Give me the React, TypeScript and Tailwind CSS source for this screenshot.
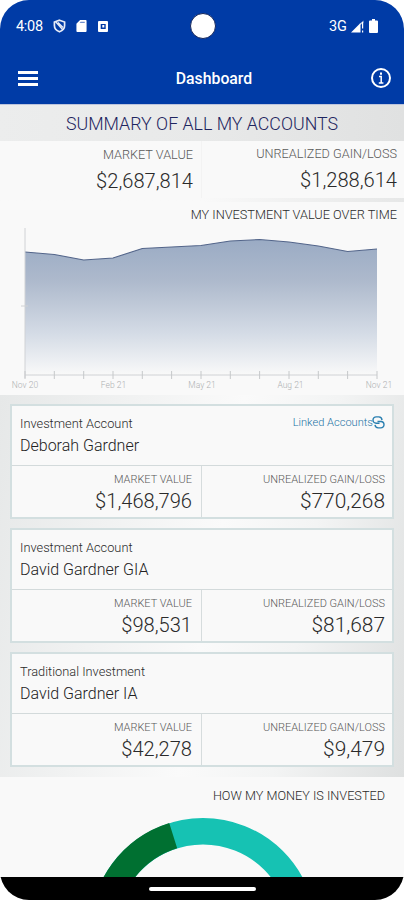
import { FunctionComponent } from "react";

type Account = {
  kind: string;
  name: string;
  marketValue: string;
  gainLoss: string;
  linked?: boolean;
};

const accounts: Account[] = [
  {
    kind: "Investment Account",
    name: "Deborah Gardner",
    marketValue: "$1,468,796",
    gainLoss: "$770,268",
    linked: true,
  },
  {
    kind: "Investment Account",
    name: "David Gardner GIA",
    marketValue: "$98,531",
    gainLoss: "$81,687",
  },
  {
    kind: "Traditional Investment",
    name: "David Gardner IA",
    marketValue: "$42,278",
    gainLoss: "$9,479",
  },
];

const months = ["Nov 20", "Feb 21", "May 21", "Aug 21", "Nov 21"];

const StatusBar: FunctionComponent = () => (
  <div className="grid h-[52px] grid-cols-[190px_26px_1fr] items-center pr-[26px] text-white">
    <div className="flex items-center pl-4">
      <span className="w-[37px] pt-0.5 text-[14.5px] leading-none tracking-[-0.3px]">4:08</span>
      <svg className="h-[14px] w-[13px]" viewBox="0 0 13 14" fill="none" stroke="#e6ebf7" strokeWidth="1.7">
        <path d="M6.5 1.2 11.6 3v3.6c0 3-2.2 5.2-5.1 6.2C3.6 11.8 1.4 9.6 1.4 6.6V3Z" />
        <path d="m2.5 2.5 7.5 8.5M5 3.5l5 5" strokeWidth="1.4" />
      </svg>
      <svg className="ml-[9.5px] h-[12px] w-[11px]" viewBox="0 0 11 13" fill="white">
        <path d="M4 0h6a1 1 0 0 1 1 1v11a1 1 0 0 1-1 1H1a1 1 0 0 1-1-1V4Z" />
        <path d="M4.5 2H9v1.2H3.5z" fill="#6f8fcf" />
      </svg>
      <svg className="ml-[11px] h-[11px] w-[10px]" viewBox="0 0 10 11">
        <rect width="10" height="11" rx="1" fill="white" />
        <rect x="2.7" y="3" width="5" height="5" fill="#0039a6" />
        <rect x="4.3" y="4" width="2" height="2.5" fill="white" />
      </svg>
    </div>
    <div className="h-[26px] w-[26px] rounded-full border border-[#14265a] bg-white" />
    <div className="flex items-center justify-end">
      <span className="pt-0.5 text-[14.5px] leading-none tracking-[-0.3px]">3G</span>
      <svg className="ml-[4px] h-[13px] w-[13px]" viewBox="0 0 13 13" fill="white">
        <path d="M0 12.5 9.5 3v9.5Z" />
        <path d="M11 2h1.2v6.5H11zM11 10.5h1.2v2H11z" />
        <path d="m8.5 4 4-3.5v2L9.5 5z" opacity="0.7" />
      </svg>
      <svg className="ml-[5.5px] h-[14px] w-[9px]" viewBox="0 0 9 14" fill="white">
        <path d="M3 0h3v1.5h2a1 1 0 0 1 1 1V13a1 1 0 0 1-1 1H1a1 1 0 0 1-1-1V2.5a1 1 0 0 1 1-1h2Z" />
      </svg>
    </div>
  </div>
);

const NavBar: FunctionComponent = () => (
  <div className="flex h-[52px] items-center pr-[13px] pl-[18px] text-white">
    <div className="flex w-5 flex-col gap-[3px]">
      <div className="h-[3px] bg-white" />
      <div className="h-[3px] bg-white" />
      <div className="h-[3px] bg-white" />
    </div>
    <h1 className="flex-1 pt-0.5 pl-[19px] text-center text-[15.8px] leading-none font-medium">Dashboard</h1>
    <svg className="h-5 w-5" viewBox="0 0 20 20" fill="none" stroke="white">
      <circle cx="10" cy="10" r="9" strokeWidth="2" />
      <path d="M8 8.5h2.2V15M7.8 15h4.6" strokeWidth="1.5" />
      <path d="M10 4.5v2.2" strokeWidth="2" />
    </svg>
  </div>
);

type FigureProps = {
  label: string;
  value: string;
};

const TotalFigure: FunctionComponent<FigureProps> = ({ label, value }) => (
  <div className="flex flex-col items-end whitespace-nowrap">
    <span className="text-[12.7px] leading-4 font-light text-[#5a5a5a]">{label}</span>
    <span className="mt-1 text-[20.1px] leading-7 font-light text-[#2a2a2a]">{value}</span>
  </div>
);

const MarketFigure: FunctionComponent<{ value: string }> = ({ value }) => (
  <div className="flex flex-col items-end whitespace-nowrap">
    <span className="text-[11px] leading-4 font-light text-[#5a5a5a]">MARKET VALUE</span>
    <span className="-mt-px text-[20.1px] leading-7 font-light text-[#2a2a2a]">{value}</span>
  </div>
);

const GainFigure: FunctionComponent<{ value: string }> = ({ value }) => (
  <div className="flex flex-col items-end whitespace-nowrap">
    <span className="text-[11px] leading-4 font-light text-[#5a5a5a]">UNREALIZED GAIN/LOSS</span>
    <span className="-mt-px text-[20.9px] leading-7 font-light text-[#2a2a2a]">{value}</span>
  </div>
);

const ValueChart: FunctionComponent = () => {
  const values = [252, 254.5, 260, 258, 248.5, 247, 245.5, 241, 239.5, 242, 246, 251.5, 249];
  const points = values.map((v, i) => `${(25 + i * 29.33).toFixed(1)},${v - 224}`).join(" ");

  return (
    <svg className="block h-[155px] w-[404px]" viewBox="0 0 404 155">
      <defs>
        <linearGradient id="area" x1="0" y1="0" x2="0" y2="1">
          <stop offset="0" stopColor="#9aabc4" />
          <stop offset="0.3" stopColor="#adb9cc" />
          <stop offset="0.7" stopColor="#d5dce6" />
          <stop offset="1" stopColor="#f9f9f9" />
        </linearGradient>
      </defs>
      <polygon points={`25,151 ${points} 377,151`} fill="url(#area)" />
      <polyline points={points} fill="none" stroke="#53658a" strokeWidth="1.1" />
      <path d="M25 4v150M21 82h7M25 151h352" stroke="#d0d2d5" fill="none" />
      {values.map((_, i) => (
        <path key={i} d={`M${(25 + i * 29.33).toFixed(1)} 147v8`} stroke="#c6c8ca" />
      ))}
    </svg>
  );
};

const LinkIcon: FunctionComponent = () => (
  <svg className="h-[13px] w-[13px]" viewBox="0 0 13 13" fill="none" stroke="#2a7fb0" strokeWidth="1.4">
    <path d="M7.5 7.3H4.2a3.200 3.200 0 0 1 0-6.400h2.600a3.400 3.400 0 0 1 3.200 3.200" />
    <path d="M5.500 5.500h3.300a3.200 3.200 0 0 1 0 6.400H6.200a3.400 3.400 0 0 1-3.200-3" />
  </svg>
);

const AccountCard: FunctionComponent<{ account: Account }> = ({ account }) => (
  <div className="h-[115px] border-2 border-[#d3dfe0] bg-[#f9f9f9]">
    <div className="flex h-[60px] justify-between border-b border-[#d3dadb] pt-[9px] pr-[7px] pl-2 whitespace-nowrap">
      <div>
        <p className="pt-px text-[12.8px] leading-4 font-light text-[#2a2a2a]">{account.kind}</p>
        <p className="mt-1 text-[16px] leading-5 font-light text-[#222]">{account.name}</p>
      </div>
      {account.linked && (
        <div className="flex h-[15px] items-center">
          <span className="pt-px text-[11.1px] leading-none font-light text-[#1d74a6]">Linked Accounts</span>
          <div className="-ml-px">
            <LinkIcon />
          </div>
        </div>
      )}
    </div>
    <div className="grid h-[51px] grid-cols-2">
      <div className="border-r border-[#d6dcdd] pt-[6px] pr-[9px]">
        <MarketFigure value={account.marketValue} />
      </div>
      <div className="pt-[6px] pr-[7px]">
        <GainFigure value={account.gainLoss} />
      </div>
    </div>
  </div>
);

const Donut: FunctionComponent = () => (
  <svg className="block h-[67px] w-[404px]" viewBox="0 810 404 67" fill="none" strokeWidth="26.5">
    <circle cx="203" cy="931" r="99.8" stroke="#16c2b3" />
    <path d="M103.2 931A99.8 99.8 0 0 1 173.2 835.7" stroke="#007031" />
  </svg>
);

export default function App() {
  return (
    <div className="h-[900px] w-[404px] overflow-hidden bg-white font-['Roboto',sans-serif]">
      <div className="flex h-full flex-col overflow-hidden rounded-[29px] bg-[#f9f9f9]">
        <header className="h-[104px] shrink-0 bg-[#003ba6]">
          <StatusBar />
          <NavBar />
        </header>
        <h2 className="h-[37px] shrink-0 border-t border-[#bcc4dc] bg-linear-to-r from-[#eceded] via-[#e8e9e9] to-[#e0e1e1] text-center text-[17.8px] leading-[38px] font-light text-[#1f2560]">
          SUMMARY OF ALL MY ACCOUNTS
        </h2>
        <section className="grid h-[57px] shrink-0 grid-cols-2">
          <div className="border-r border-[#f3f3f3] pt-[6px] pr-[8px]">
            <TotalFigure label="MARKET VALUE" value="$2,687,814" />
          </div>
          <div className="pt-[5px] pr-[7px]">
            <TotalFigure label="UNREALIZED GAIN/LOSS" value="$1,288,614" />
          </div>
        </section>
        <div className="h-1 shrink-0 bg-linear-to-r from-[#f9f9f9] from-50% to-[#e6e7e7]" />
        <section className="h-[193px] shrink-0">
          <h3 className="h-[22px] pt-[5px] pr-[7px] text-right text-[12.75px] leading-4 font-light text-[#2a2a2a]">
            MY INVESTMENT VALUE OVER TIME
          </h3>
          <ValueChart />
          <div className="flex justify-between text-[8.5px] leading-3 font-light text-[#aeb0b2]">
            {months.map((m) => (
              <span key={m} className="w-[50px] text-center">
                {m}
              </span>
            ))}
          </div>
        </section>
        <section className="flex h-[382px] shrink-0 flex-col gap-[9px] bg-[linear-gradient(100deg,#e6e8e8_0%,#f1f2f2_28%,#fafafa_52%,#f3f4f4_72%,#dee0e0_100%)] px-[10px] pt-[9px]">
          {accounts.map((a) => (
            <AccountCard key={a.name} account={a} />
          ))}
        </section>
        <section className="h-[100px] shrink-0">
          <h3 className="h-[33px] pt-[11px] pr-[19px] text-right text-[12.7px] leading-4 font-light text-[#2a2a2a]">
            HOW MY MONEY IS INVESTED
          </h3>
          <Donut />
        </section>
        <footer className="flex h-[23px] shrink-0 justify-center bg-black pt-[10px]">
          <div className="h-1 w-[107px] rounded-full bg-white" />
        </footer>
      </div>
    </div>
  );
}
